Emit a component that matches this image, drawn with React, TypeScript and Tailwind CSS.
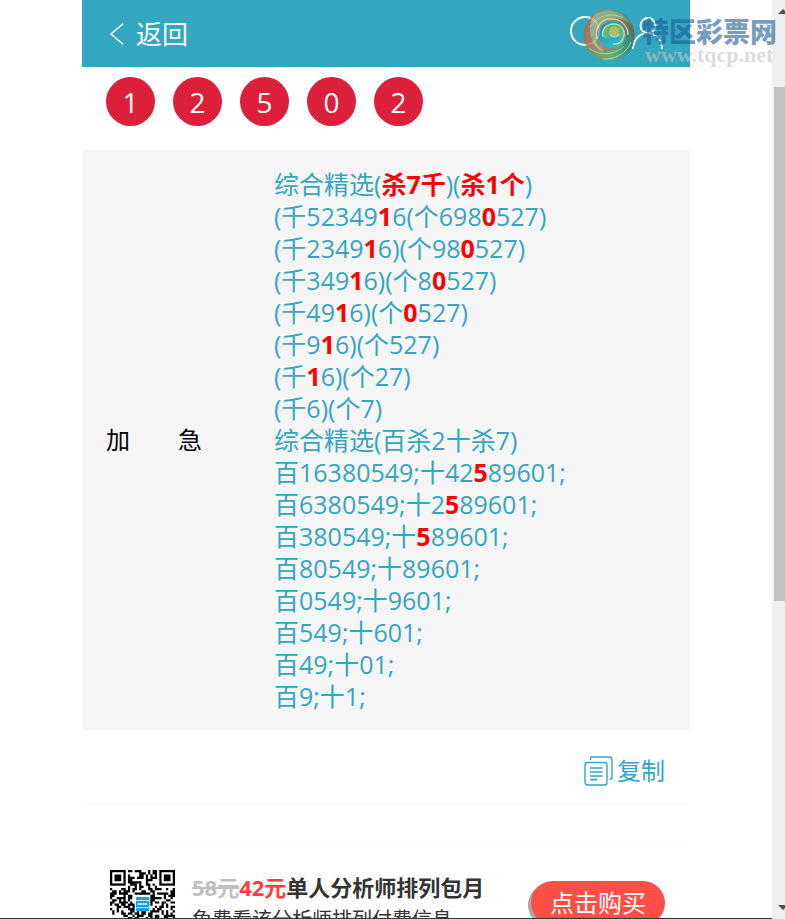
import { Fragment } from "react";

const draw = ["1", "2", "5", "0", "2"];

// Parts wrapped in asterisks are hits and get highlighted.
const picks = [
  "综合精选(*杀7千*)(*杀1个*)",
  "(千52349*1*6(个698*0*527)",
  "(千2349*1*6)(个98*0*527)",
  "(千349*1*6)(个8*0*527)",
  "(千49*1*6)(个*0*527)",
  "(千9*1*6)(个527)",
  "(千*1*6)(个27)",
  "(千6)(个7)",
  "综合精选(百杀2十杀7)",
  "百16380549;十42*5*89601;",
  "百6380549;十2*5*89601;",
  "百380549;十*5*89601;",
  "百80549;十89601;",
  "百0549;十9601;",
  "百549;十601;",
  "百49;十01;",
  "百9;十1;",
];

function PickLine({ text }: { text: string }) {
  return (
    <p>
      {text.split("*").map((part, i) =>
        i % 2 === 1 ? (
          <strong key={i} className="font-bold text-[#ff0000]">
            {part}
          </strong>
        ) : (
          <Fragment key={i}>{part}</Fragment>
        ),
      )}
    </p>
  );
}

const QR_SIZE = 29;

function qrPath() {
  let seed = 20177;
  let d = "";
  const inFinder = (x: number, y: number) =>
    (x < 8 && y < 8) ||
    (x > QR_SIZE - 9 && y < 8) ||
    (x < 8 && y > QR_SIZE - 9);
  for (let y = 0; y < QR_SIZE; y++) {
    for (let x = 0; x < QR_SIZE; x++) {
      seed = (seed * 1103515245 + 12345) % 2147483648;
      const inLogo = x > 10 && x < 18 && y > 10 && y < 18;
      if (!inFinder(x, y) && !inLogo && seed / 2147483648 < 0.52) {
        d += `M${x} ${y}h1v1h-1z`;
      }
    }
  }
  return d;
}

function QrCode() {
  const finders = [
    [0, 0],
    [QR_SIZE - 7, 0],
    [0, QR_SIZE - 7],
  ];
  return (
    <svg viewBox="0 0 29 29" className="size-[65px] shrink-0" role="img" aria-label="QR">
      <path d={qrPath()} fill="#000" />
      {finders.map(([x, y]) => (
        <g key={`${x}-${y}`}>
          <rect x={x + 0.5} y={y + 0.5} width="6" height="6" fill="#fff" stroke="#000" />
          <rect x={x + 2} y={y + 2} width="3" height="3" />
        </g>
      ))}
      <rect x="11.6" y="12" width="6" height="6.4" rx="0.5" fill="#14a0e6" />
      <path d="M11.6 13.6h6M11.6 16.8h6" stroke="#d9f0fb" strokeWidth="0.4" />
      <path d="M12.4 15.2h4.4" stroke="#fff" strokeWidth="0.9" strokeDasharray="0.8 0.3" />
    </svg>
  );
}

function SiteMark() {
  return (
    <svg viewBox="0 0 52 52" className="size-[52px] opacity-80" aria-hidden="true">
      <defs>
        <linearGradient id="rim" x1="0" y1="0.4" x2="1" y2="0.6">
          <stop offset="0" stopColor="#c0603f" />
          <stop offset="0.4" stopColor="#b98d5c" />
          <stop offset="1" stopColor="#84463a" />
        </linearGradient>
        <linearGradient id="leaf" x1="0" y1="0" x2="1" y2="0.6">
          <stop offset="0" stopColor="#cda874" />
          <stop offset="0.5" stopColor="#8fb878" />
          <stop offset="1" stopColor="#4f7f63" />
        </linearGradient>
        <linearGradient id="base" x1="0" y1="0" x2="1" y2="0">
          <stop offset="0" stopColor="#8f8d3e" />
          <stop offset="0.5" stopColor="#73b658" />
          <stop offset="1" stopColor="#2f7f76" />
        </linearGradient>
        <linearGradient id="pool" x1="0" y1="0" x2="0.6" y2="1">
          <stop offset="0" stopColor="#1787c4" />
          <stop offset="1" stopColor="#35c3d2" />
        </linearGradient>
      </defs>
      <circle cx="26" cy="26" r="25.5" fill="url(#rim)" />
      <path d="M12 5C24-2 42 2 49 16 40 8 28 7 21 13 12 20 11 33 18 42 6 34 3 15 12 5z" fill="url(#leaf)" />
      <path d="M5 40c10 5 24 4 33-4 5-5 7-11 7-17 8 9 7 19-1 26-11 10-30 8-39-5z" fill="url(#base)" />
      <circle cx="29" cy="26" r="13.5" fill="url(#pool)" />
      <path d="M19 27c-1-9 6-14 13-13 8 1 12 8 10 15-2 6-7 10-13 10 6-3 9-7 8-12-1-4-4-6-7-5-4 1-5 4-3 7-4 1-7 0-8-2z" fill="#6fbb72" />
      <circle cx="31" cy="22.5" r="5" fill="#d0c63f" />
      <path d="M14 30C11 18 19 9 29 10c9 0 16 7 16 16" fill="none" stroke="#e8e0b0" strokeWidth="1.4" />
      <path d="M20 28c-2-8 4-13 11-13s11 6 10 12c-1 5-6 9-11 8" fill="none" stroke="#dff0c0" strokeWidth="1.2" />
      <path d="M27 25c2 4 7 4 9 0" fill="none" stroke="#dff0c0" strokeWidth="1.2" />
      <path d="M7 18c6-10 20-16 33-9M6 39c10 8 25 8 35-2M20 50c12 1 24-6 28-17" fill="none" stroke="#efdcb4" strokeWidth="1" opacity="0.8" />
    </svg>
  );
}

function Watermark() {
  return (
    <div className="pointer-events-none absolute top-[9px] right-[8px] flex gap-[7px]">
      <SiteMark />
      <div className="pt-2">
        <div className="font-['Noto_Sans_CJK_SC',sans-serif] text-[27px] leading-[28px] font-black text-[#1a5c98]/60">
          特区彩票网
        </div>
        <div className="pl-[3px] font-['Liberation_Serif',serif] text-[22px] leading-[20px] font-bold text-[#c4c4c4]/60">
          www.tqcp.net
        </div>
      </div>
    </div>
  );
}

function Header() {
  return (
    <header className="flex h-[67px] items-center justify-between bg-[#33a6c0] px-[27px] text-white">
      <a href="#back" className="flex items-center gap-3 text-[26px] leading-[36px]">
        <svg viewBox="0 0 15 22" className="h-[22px] w-[15px]" fill="none" stroke="currentColor" strokeWidth="1.5" aria-hidden="true">
          <path d="M14 .8 2 11l12 10.2" />
        </svg>
        返回
      </a>
      <div className="flex items-center gap-7">
        <button type="button" aria-label="搜索">
          <svg viewBox="0 0 35 36" className="h-9 w-[35px]" fill="none" stroke="currentColor" strokeWidth="2" aria-hidden="true">
            <circle cx="17" cy="15" r="14" />
            <path d="m24 26 11 9" strokeWidth="2.4" />
          </svg>
        </button>
        <button type="button" aria-label="我的">
          <svg viewBox="0 0 32 34" className="h-[34px] w-8" fill="none" stroke="currentColor" strokeWidth="1.8" aria-hidden="true">
            <circle cx="17" cy="8.5" r="7.5" />
            <path d="M2 32a14.5 16 0 0 1 29 0" />
          </svg>
        </button>
      </div>
    </header>
  );
}

function CopyIcon() {
  return (
    <svg viewBox="0 0 29 30" className="h-[30px] w-[29px]" fill="none" stroke="currentColor" strokeWidth="1.4" aria-hidden="true">
      <rect x="1" y="6.5" width="22" height="22.5" rx="2.5" />
      <path d="M6.5 4V2.5Q6.5 1 8 1h17.5Q28 1 28 3.5V21q0 2.5-2.5 2.5" />
      <path d="M6 12h12.5M6 16h12.5M6 20h12.5M6 23.7h7" strokeWidth="1.7" />
    </svg>
  );
}

function Scrollbar() {
  return (
    <div className="flex w-[13px] shrink-0 flex-col overflow-hidden bg-[#f0f0f0]" aria-hidden="true">
      <svg viewBox="0 0 17 17" className="size-[17px] shrink-0">
        <path d="M6 14h10l-5-5z" fill="#505050" />
      </svg>
      <div className="flex-[70]" />
      <div className="ml-[2px] flex-[514] bg-[#c1c1c1]" />
      <div className="flex-[301]" />
      <svg viewBox="0 0 17 17" className="size-[17px] shrink-0">
        <path d="M6 3h10l-5 5z" fill="#505050" />
      </svg>
    </div>
  );
}

export default function App() {
  return (
    <div className="relative flex h-screen overflow-hidden bg-white font-['Open_Sans','Noto_Sans_CJK_SC',sans-serif]">
      <div className="flex-1 overflow-hidden border-b border-[#33323f]">
        <main className="mx-auto w-full max-w-[608px]">
          <Header />
          <ul className="flex gap-[18px] px-6 pt-[10px] pb-6">
            {draw.map((n, i) => (
              <li
                key={i}
                className="flex size-[49px] items-center justify-center rounded-full bg-[#dc203c] text-[28px] leading-[48px] text-white"
              >
                {n}
              </li>
            ))}
          </ul>

          <section className="flex items-center bg-[#f5f5f5] py-[18px]">
            <h2 className="w-[192px] shrink-0 pl-6 text-[24px] leading-[32px] text-black">
              加　　急
            </h2>
            <div className="text-[25px] leading-[32px] text-[#34a6bf]">
              {picks.map((line) => (
                <PickLine key={line} text={line} />
              ))}
            </div>
          </section>

          <div className="flex h-[74px] items-center justify-end border-b border-[#f8f8f8] px-[25px] pt-2">
            <button type="button" className="flex items-center gap-1 text-[24px] leading-[32px] text-[#34a6bf]">
              <CopyIcon />
              复制
            </button>
          </div>

          <section className="mt-[37px] flex items-start border-t border-[#fbfbfb] pt-7 pr-[25px] pl-7">
            <QrCode />
            <div className="ml-[17px] flex-1">
              <h3 className="text-[22px] leading-[34px] font-bold text-[#333333]">
                <del className="text-[#bfbfbf]">58元</del>
                <span className="text-[#ff3b3b]">42元</span>
                单人分析师排列包月
              </h3>
              <p className="text-[20px] leading-[32px] text-[#333333]">
                免费看该分析师排列付费信息
              </p>
            </div>
            <button
              type="button"
              className="mt-[11px] h-11 rounded-full bg-[#ff4e46] px-[19px] text-[24px] leading-[44px] text-white shadow-[-3px_2px_0_#a9a9a9]"
            >
              点击购买
            </button>
          </section>
        </main>
      </div>
      <Scrollbar />
      <Watermark />
    </div>
  );
}
